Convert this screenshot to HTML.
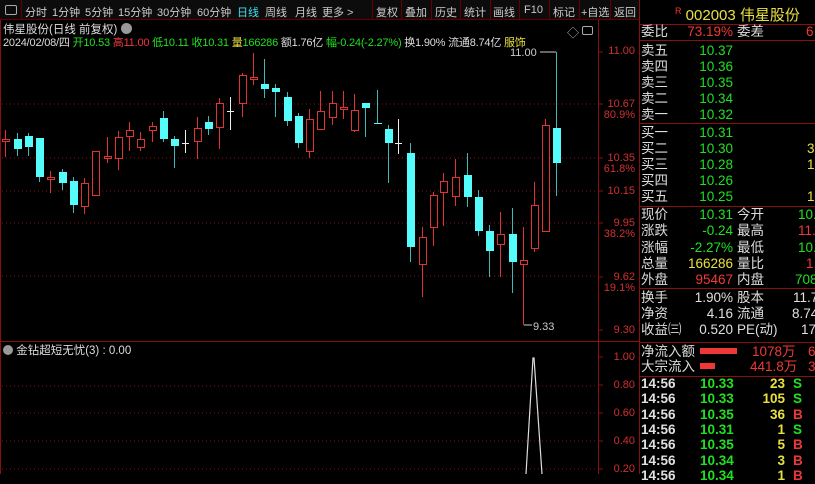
<!DOCTYPE html>
<html><head><meta charset="utf-8">
<style>
*{margin:0;padding:0;box-sizing:border-box}
body{width:815px;height:474px;background:#000;overflow:hidden;position:relative;font-family:"Liberation Sans","Noto Sans CJK SC",sans-serif;color:#ddd}
.a{position:absolute;white-space:nowrap}
#tb{position:absolute;left:0;top:0;width:640px;height:20px;background:#0c0c0c;border-bottom:1px solid #600;font-size:11px;color:#ccc}
#tb span{position:absolute;top:4px}
.sep{position:absolute;top:0;width:1px;height:20px;background:#600}
.ax{position:absolute;right:180px;font-size:11px;color:#d03030;text-align:right;line-height:11px}
.r{font-size:13.5px;line-height:16px}
.g{color:#20e020}.y{color:#e8e040}.rd{color:#f03838}.w{color:#e0e0e0}
</style></head><body>
<div id="tb">
<div style="position:absolute;left:5px;top:5px;width:12px;height:10px;border:1px solid #aaa;border-radius:2px"></div>
<div class="sep" style="left:21px"></div>
<span style="left:25px">分时</span><span style="left:52px">1分钟</span><span style="left:85px">5分钟</span><span style="left:118px">15分钟</span><span style="left:157px">30分钟</span><span style="left:197px">60分钟</span><span style="left:237px;color:#40e0f0">日线</span><span style="left:265px">周线</span><span style="left:295px">月线</span><span style="left:322px">更多 &gt;</span>
<div class="sep" style="left:372px"></div><span style="left:376px">复权</span>
<div class="sep" style="left:401px"></div><span style="left:405px">叠加</span>
<div class="sep" style="left:431px"></div><span style="left:435px">历史</span>
<div class="sep" style="left:460px"></div><span style="left:464px">统计</span>
<div class="sep" style="left:490px"></div><span style="left:493px">画线</span>
<div class="sep" style="left:519px"></div><span style="left:524px">F10</span>
<div class="sep" style="left:549px"></div><span style="left:553px">标记</span>
<div class="sep" style="left:579px"></div><span style="left:581px">+自选</span>
<div class="sep" style="left:610px"></div><span style="left:614px">返回</span>
</div>
<div class="a" style="left:3px;top:21px;font-size:11.5px;color:#ddd">伟星股份(日线 前复权) <span style="display:inline-block;width:11px;height:11px;border-radius:6px;background:#999;vertical-align:-1px"></span></div>
<div class="a" style="left:3px;top:34px;font-size:11px;letter-spacing:-0.2px;color:#ddd">2024/02/08/四 <span class="g">开10.53</span> <span class="rd">高11.00</span> <span class="g">低10.11</span> <span class="g">收10.31</span> <span class="y">量</span><span class="g">166286</span> 额1.76亿 <span class="g">幅-0.24(-2.27%)</span> 换1.90% 流通8.74亿 <span class="y">服饰</span></div>
<div class="a" style="left:567px;top:24px;font-size:12px;color:#aaa">◇</div>
<div style="position:absolute;left:582px;top:26px;width:11px;height:9px;border:1px solid #aaa;border-radius:2px"></div>

<svg class="a" style="left:0;top:0" width="815" height="474">
<g stroke="#8a1010" stroke-dasharray="1,3" stroke-width="1">
<line x1="2" y1="104" x2="598" y2="104"/><line x1="2" y1="158" x2="598" y2="158"/><line x1="2" y1="191" x2="598" y2="191"/><line x1="2" y1="223" x2="598" y2="223"/><line x1="2" y1="276" x2="598" y2="276"/>
<line x1="2" y1="386" x2="598" y2="386"/><line x1="2" y1="413" x2="598" y2="413"/><line x1="2" y1="441" x2="598" y2="441"/><line x1="2" y1="469" x2="598" y2="469"/>
</g>
<g stroke="#8a1010" stroke-width="1">
<line x1="0.5" y1="20" x2="0.5" y2="474"/><line x1="598.5" y1="20" x2="598.5" y2="474"/><line x1="639.5" y1="0" x2="639.5" y2="474"/>
<line x1="0" y1="341.5" x2="640" y2="341.5"/>
<line x1="598" y1="52" x2="603" y2="52"/><line x1="598" y1="104" x2="603" y2="104"/><line x1="598" y1="158" x2="603" y2="158"/><line x1="598" y1="191" x2="603" y2="191"/><line x1="598" y1="223" x2="603" y2="223"/><line x1="598" y1="277" x2="603" y2="277"/><line x1="598" y1="330" x2="603" y2="330"/>
<line x1="598" y1="357" x2="603" y2="357"/><line x1="598" y1="385" x2="603" y2="385"/><line x1="598" y1="413" x2="603" y2="413"/><line x1="598" y1="441" x2="603" y2="441"/><line x1="598" y1="469" x2="603" y2="469"/>
<line x1="640" y1="24.5" x2="815" y2="24.5"/><line x1="640" y1="40.5" x2="815" y2="40.5"/><line x1="640" y1="123.5" x2="815" y2="123.5"/><line x1="640" y1="206.5" x2="815" y2="206.5"/><line x1="640" y1="288.5" x2="815" y2="288.5"/><line x1="640" y1="342.5" x2="815" y2="342.5"/><line x1="640" y1="376.5" x2="815" y2="376.5"/>
</g>
<g id="cd"></g>
<polyline points="526,474 533,358 534,358 542,474" fill="none" stroke="#ddd" stroke-width="1.2"/>
<line x1="540" y1="52" x2="556" y2="52" stroke="#ccc"/><line x1="524" y1="325" x2="532" y2="325" stroke="#ccc"/>
<text x="510" y="56" font-size="11" fill="#ccc" font-family="Liberation Sans">11.00</text>
<text x="533" y="330" font-size="11" fill="#ccc" font-family="Liberation Sans">9.33</text>
</svg>
<div class="ax" style="top:46px">11.00</div>
<div class="ax" style="top:99px">10.67<br>80.9%</div>
<div class="ax" style="top:153px">10.35<br>61.8%</div>
<div class="ax" style="top:186px">10.15</div>
<div class="ax" style="top:218px">9.95<br>38.2%</div>
<div class="ax" style="top:272px">9.62<br>19.1%</div>
<div class="ax" style="top:325px">9.30</div>
<div class="ax" style="top:352px">1.00</div>
<div class="ax" style="top:380px">0.80</div>
<div class="ax" style="top:408px">0.60</div>
<div class="ax" style="top:436px">0.40</div>
<div class="ax" style="top:464px">0.20</div>
<div class="a" style="left:3px;top:342px;font-size:11.5px;color:#ddd"><span style="display:inline-block;width:10px;height:10px;border-radius:5px;background:#999;vertical-align:-1px"></span> 金钻超短无忧(3) : 0.00</div>

<div class="a y" style="left:675px;top:4px;font-size:15px"><sup style="color:#f03838;font-size:9px">R</sup> 002003 伟星股份</div>
<div id="rp"></div>
<script>
var C=[[5,'r',139,141,130,157],[17,'c',139,149,133,156],[28,'c',136,147,133,156],[39,'c',138,177,138,182],[50,'r',177,179,171,193],[62,'c',172,183,169,190],[73,'c',181,205,177,213],[84,'r',183,206,178,214],[95,'r',151,195,151,195],[107,'r',156,158,137,163],[118,'r',137,158,131,170],[129,'r',130,136,122,151],[140,'r',139,147,132,151],[152,'r',126,130,122,142],[163,'c',118,139,111,142],[174,'c',139,146,136,168],[185,'w',143,143,130,153],[197,'r',128,141,117,159],[208,'c',122,129,116,135],[219,'r',103,127,98,149],[230,'w',111,111,97,130],[242,'r',75,103,73,117],[253,'r',77,79,53,85],[264,'c',84,89,59,98],[275,'c',88,92,84,117],[287,'c',97,121,92,126],[298,'c',116,143,113,148],[309,'r',119,151,109,158],[320,'r',111,129,91,130],[332,'r',103,117,91,125],[343,'r',107,109,91,119],[354,'r',110,130,94,132],[365,'c',103,108,103,137],[377,'c',123,124,90,124],[388,'c',129,143,125,183],[398,'w',143,143,119,154],[410,'c',153,247,143,262],[422,'r',237,264,227,297],[433,'r',195,227,192,246],[443,'r',181,192,173,226],[455,'r',177,196,159,206],[467,'c',175,197,153,207],[478,'c',197,231,190,236],[489,'c',231,251,225,277],[500,'r',234,244,212,277],[512,'c',234,262,208,293],[523,'r',260,264,227,325],[534,'r',205,248,182,252],[545,'r',125,231,119,232],[556,'c',128,163,52,196]];
var s='';C.forEach(function(c){var x=c[0],col=c[1]=='r'?'#e03434':c[1]=='c'?'#54fcfc':'#eee';
var wc=c[1]=='c'?'#3fb8b8':col;
s+='<line x1="'+(x+.5)+'" y1="'+c[4]+'" x2="'+(x+.5)+'" y2="'+c[5]+'" stroke="'+wc+'"/>';
if(c[1]=='w'){s+='<line x1="'+(x-3)+'" y1="'+(c[2]+.5)+'" x2="'+(x+4)+'" y2="'+(c[2]+.5)+'" stroke="#eee"/>';}
else if(c[1]=='c'){s+='<rect x="'+(x-3)+'" y="'+c[2]+'" width="8" height="'+Math.max(1,c[3]-c[2])+'" fill="#54fcfc"/>';}
else{s+='<rect x="'+(x-2.5)+'" y="'+(c[2]+.5)+'" width="7" height="'+Math.max(1,c[3]-c[2])+'" fill="#000" stroke="#e03434"/>';}});
document.getElementById('cd').innerHTML=s;
var R=[[32,'委比','73.19%','rd','委差','6','rd',806],[51,'卖五','10.37','g'],[67,'卖四','10.36','g'],[83,'卖三','10.35','g'],[99,'卖二','10.34','g'],[115,'卖一','10.32','g'],
[133,'买一','10.31','g'],[149,'买二','10.30','g','','3','y',807],[165,'买三','10.28','g','','1','y',807],[181,'买四','10.26','g'],[197,'买五','10.25','g','','1','y',807],
[215,'现价','10.31','g','今开','10.','g',798],[231,'涨跌','-0.24','g','最高','11.','rd',798],[248,'涨幅','-2.27%','g','最低','10.','g',798],[264,'总量','166286','y','量比','1.','rd',806],[280,'外盘','95467','rd','内盘','708','g',795],
[298,'换手','1.90%','w','股本','11.7','w',793],[314,'净资','4.16','w','流通','8.74','w',792],[330,'收益㈢','0.520','w','PE(动)','17','w',801]];
var h='';R.forEach(function(r){var t=r[0]-8;
h+='<div class="a r" style="left:641px;top:'+t+'px;color:#ddd">'+r[1]+'</div>';
h+='<div class="a r '+r[3]+'" style="right:82px;top:'+t+'px">'+r[2]+'</div>';
if(r[4])h+='<div class="a r" style="left:737px;top:'+t+'px;color:#ddd">'+r[4]+'</div>';
if(r[5])h+='<div class="a r '+r[6]+'" style="left:'+r[7]+'px;top:'+t+'px">'+r[5]+'</div>';});
h+='<div class="a r" style="left:641px;top:344px">净流入额</div><div style="position:absolute;left:700px;top:348px;width:37px;height:6px;background:#f03838"></div><div class="a r rd" style="left:752px;top:344px">1078万</div><div class="a r rd" style="left:808px;top:344px">6</div>';
h+='<div class="a r" style="left:641px;top:359px">大宗流入</div><div style="position:absolute;left:700px;top:363px;width:15px;height:6px;background:#f03838"></div><div class="a r rd" style="left:750px;top:359px">441.8万</div><div class="a r rd" style="left:808px;top:359px">3</div>';
var T=[['10.33','23','S'],['10.33','105','S'],['10.35','36','B'],['10.31','1','S'],['10.35','5','B'],['10.34','3','B'],['10.34','1','B']];
T.forEach(function(r,i){var t=376+i*15.3;
h+='<div class="a r w" style="left:641px;top:'+t+'px;font-weight:bold">14:56</div><div class="a r g" style="left:700px;top:'+t+'px;font-weight:bold">'+r[0]+'</div><div class="a r y" style="right:30px;top:'+t+'px;font-weight:bold">'+r[1]+'</div><div class="a r '+(r[2]=='S'?'g':'rd')+'" style="left:793px;top:'+t+'px;font-weight:bold">'+r[2]+'</div>';});
document.getElementById('rp').innerHTML=h;
</script>
</body></html>
